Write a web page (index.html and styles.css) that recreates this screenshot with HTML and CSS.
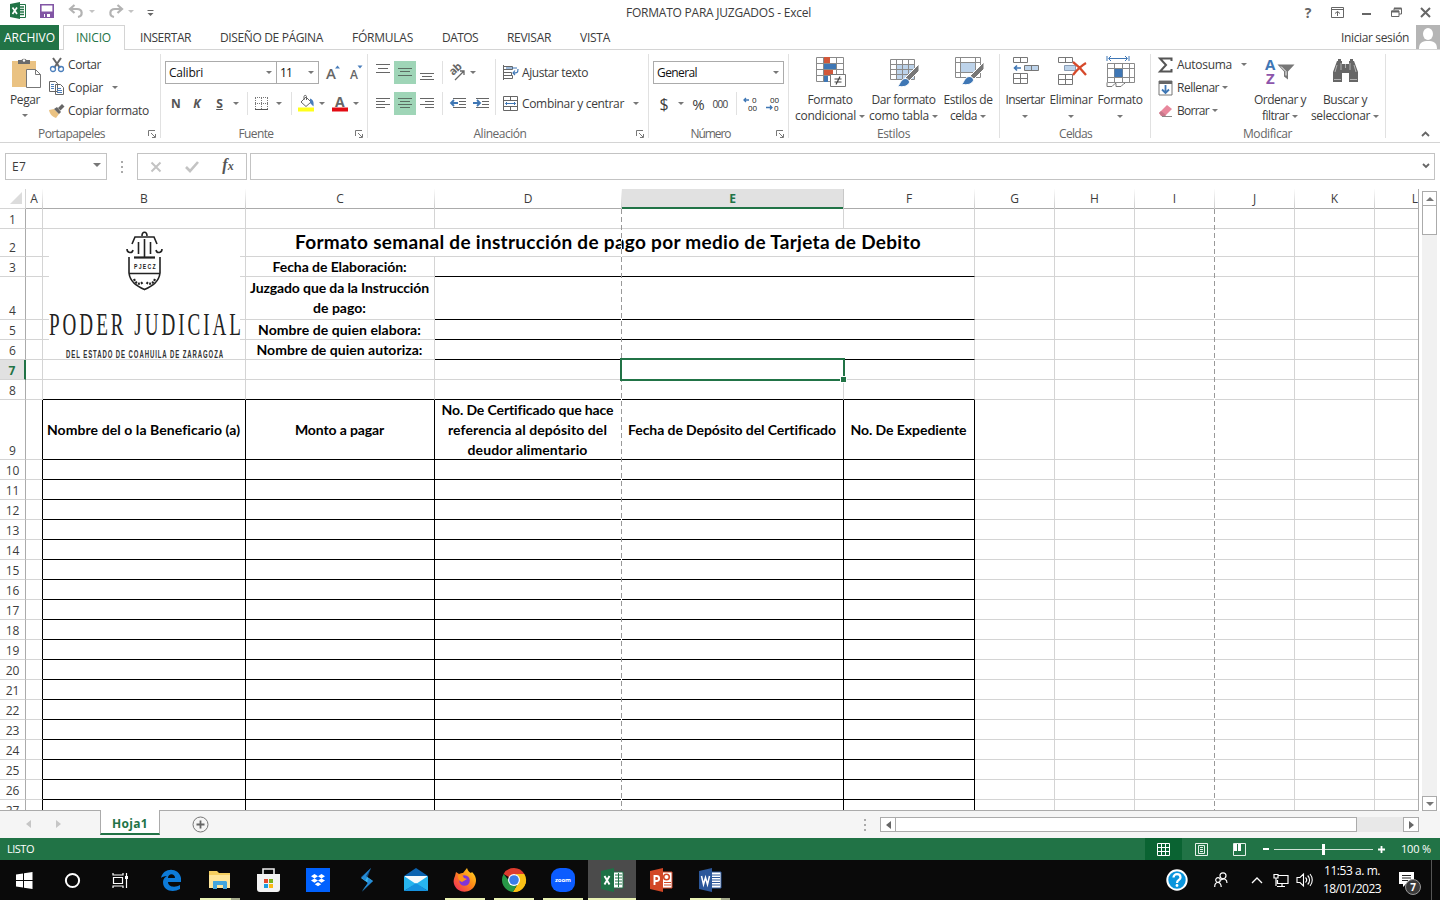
FILE: index.html
```html
<!DOCTYPE html>
<html lang="es">
<head>
<meta charset="utf-8">
<title>FORMATO PARA JUZGADOS - Excel</title>
<link rel="stylesheet" href="styles.css">
</head>
<body>
<div class="app">
  <header class="titlebar">
    <div class="quick">
      <svg width="18" height="18" viewBox="0 0 18 18"><path d="M9 2.500h7.500v13H9" fill="#fff" stroke="#217346"/><path d="M11 5h4M11 7.500h4M11 10h4M11 12.500h4" stroke="#217346" stroke-width="1.300"/><path d="M1 2l10-2v17L1 15z" fill="#217346"/><path d="M3.500 5.500l4.500 6.500M8 5.500L3.500 12" stroke="#fff" stroke-width="1.700"/></svg>
      <svg class="save" width="14" height="14" viewBox="0 0 14 14"><path d="M.8.8h12.400v12.400H.8z" fill="#fff" stroke="#8256a5" stroke-width="1.600"/><path d="M1 7.500h12v6H1z" fill="#8256a5"/><path d="M4 10h6v3H4z" fill="#fff"/><path d="M5 10h2v3H5z" fill="#8256a5"/></svg>
      <svg class="undo" width="16" height="14" viewBox="0 0 16 14"><path d="M6.500 1L2 5l4.500 4M2 5h7c6 0 6 7 1 8" fill="none" stroke="#b3b3b3" stroke-width="2.200"/></svg>
      <i class="dn pale"></i>
      <svg class="redo" width="16" height="14" viewBox="0 0 16 14"><path d="M9.500 1L14 5 9.500 9M14 5H7C1 5 1 12 6 13" fill="none" stroke="#b3b3b3" stroke-width="2.200"/></svg>
      <i class="dn pale"></i>
      <svg class="custom" width="7" height="8" viewBox="0 0 7 8"><path d="M.5 1.500h6" stroke="#666"/><path d="M.5 4h6l-3 3z" fill="#666"/></svg>
    </div>
    <div class="doc"><span data-w="185">FORMATO PARA JUZGADOS - Excel</span></div>
    <div class="wincontrols">
      <b>?</b>
      <svg width="13" height="11" viewBox="0 0 13 11"><path d="M.5.5h12v10H.5zM.5 2.500h12M6.500 9V4.500M4 6.500l2.500-2 2.500 2" fill="none" stroke="#666"/></svg>
      <svg width="11" height="11" viewBox="0 0 11 11"><path d="M1 7h9" stroke="#666" stroke-width="2"/></svg>
      <svg width="11" height="11" viewBox="0 0 11 11"><path d="M3 3V1.500h7.500V7H8M.5 4h7.500v5.500H.5z" fill="none" stroke="#666"/><path d="M3 1.500h7.500M.5 4.500H8" stroke="#666" stroke-width="2"/></svg>
      <svg width="11" height="11" viewBox="0 0 11 11"><path d="M1 1l9 9M10 1l-9 9" stroke="#666" stroke-width="2"/></svg>
    </div>
  </header>

  <nav class="tabs">
    <div class="file"><span data-w="51">ARCHIVO</span></div>
    <div class="active"><span data-w="35">INICIO</span></div>
    <div class="others"><span data-w="51">INSERTAR</span><span data-w="103">DISEÑO DE PÁGINA</span><span data-w="61">FÓRMULAS</span><span data-w="36">DATOS</span><span data-w="44">REVISAR</span><span data-w="30">VISTA</span></div>
    <div class="login"><span data-w="68">Iniciar sesión</span>
      <svg width="24" height="24" viewBox="0 0 24 24"><path d="M0 0h24v24H0z" fill="#b5b5b5"/><ellipse cx="12" cy="9" rx="5" ry="6" fill="#fff"/><path d="M3 24c0-7 4-8 9-8s9 1 9 8z" fill="#fff"/></svg></div>
  </nav>

  <section class="ribbon">
    <div class="group clip">
      <div class="body">
        <div class="big paste">
          <svg width="31" height="32" viewBox="0 0 31 32"><path d="M1 4h24v26H1z" fill="#eac282"/><path d="M7 7V3h3.500a3 3 0 0 1 5 0H19v4z" fill="#6b6b6b"/><circle cx="13" cy="3.500" r="1.200" fill="#fff"/><path d="M15.500 12.500h9l5 5v13h-14z" fill="#fff" stroke="#777"/><path d="M24.500 12.500v5h5" fill="none" stroke="#777"/></svg>
          <span data-w="30">Pegar</span><i class="dn"></i>
        </div>
        <div class="list">
          <div><svg width="16" height="16" viewBox="0 0 16 16"><path d="M4 1l7 10M12 1L5 11" stroke="#666" stroke-width="2"/><circle cx="4" cy="12" r="2.500" fill="none" stroke="#4a7ebb" stroke-width="1.300"/><circle cx="12" cy="12" r="2.500" fill="none" stroke="#4a7ebb" stroke-width="1.300"/></svg><span data-w="33">Cortar</span></div>
          <div><svg width="16" height="16" viewBox="0 0 16 16"><path d="M.5 1.500h6l2 2v8h-8zM6.500 4.500h5l3 3v7h-8z" fill="#fff" stroke="#666"/><path d="M2 4.500h3M2 6.500h3M2 8.500h3M8 8.500h4M8 10.500h5M8 12.500h5" stroke="#4a7ebb"/></svg><span data-w="35">Copiar</span><i class="dn"></i></div>
          <div><svg width="16" height="16" viewBox="0 0 16 16"><path d="M0 7l5-1 5 5-3 4C4 14 1 12 0 7z" fill="#eac282"/><path d="M5 6l3-2 4 5-2 2zM9 5l4-4 2.500 2.500-4 4z" fill="#666"/></svg><span data-w="81">Copiar formato</span></div>
        </div>
      </div>
      <footer><span data-w="67">Portapapeles</span><svg class="launch" width="8" height="8" viewBox="0 0 8 8"><path d="M.5 6V.5H7M3 3l4 4M7.500 4v3.500H4" fill="none" stroke="#777"/></svg></footer>
    </div>

    <div class="group font">
      <div class="body col">
        <div class="combos"><div class="combo"><span data-w="34">Calibri</span><i class="dn"></i></div><div class="combo size"><span data-w="12">11</span><i class="dn"></i></div>
          <svg width="14" height="16" viewBox="0 0 14 16"><text x="-1" y="14" class="ga">A</text><path d="M8 3.500l2.500-3 2.500 3z" fill="#4a7ebb"/></svg>
          <svg width="14" height="16" viewBox="0 0 14 16"><text x="1" y="14" class="ga small">A</text><path d="M8.500.5l2.500 3 2.500-3z" fill="#4a7ebb"/></svg></div>
        <div class="marks"><b>N</b><b><em>K</em></b><b><u>S</u></b><i class="dn"></i><i class="sep"></i>
          <svg width="14" height="14" viewBox="0 0 14 14"><path d="M.5 1v12M6.500 1v12M12.500 1v12M0 .5h13M0 6.500h13" stroke="#777" stroke-dasharray="1 1"/><path d="M0 12.500h13" stroke="#555"/></svg><i class="dn"></i><i class="sep"></i>
          <svg width="17" height="17" viewBox="0 0 17 17"><path d="M3 7l5-5 5 5-5 4.500zM6 5V1.500c0-1.500 2.500-1.500 2.500 0V5" fill="#fff" stroke="#666"/><path d="M12 3.500c3 1 4 3 3.500 8L12 8z" fill="#4a7ebb"/><path d="M0 12.500h16v4H0z" fill="#ffff1a"/></svg><i class="dn"></i>
          <svg width="17" height="17" viewBox="0 0 17 17"><text x="3" y="11.500" class="fa">A</text><path d="M0 12.500h16v4H0z" fill="#e30b12"/></svg><i class="dn"></i></div>
      </div>
      <footer><span data-w="35">Fuente</span><svg class="launch" width="8" height="8" viewBox="0 0 8 8"><path d="M.5 6V.5H7M3 3l4 4M7.500 4v3.500H4" fill="none" stroke="#777"/></svg></footer>
    </div>

    <div class="group align">
      <div class="body">
        <div class="aligns">
          <svg width="14" height="23" viewBox="0 0 14 23"><path d="M0 3.500h14M2 7.500h10M0 11.500h14" stroke="#666"/></svg>
          <svg class="on" width="22" height="23" viewBox="-4 0 22 23"><path d="M0 7.500h14M2 10.500h10M0 14.500h14" stroke="#5b6d62"/></svg>
          <svg width="14" height="23" viewBox="0 0 14 23"><path d="M0 12.500h14M2 15.500h10M0 18.500h14" stroke="#666"/></svg><i class="sep"></i>
          <svg width="18" height="18" viewBox="0 0 18 18"><text transform="translate(4 12) rotate(-42)" class="ab" textLength="13">ab</text><path d="M6 16l9-9M11 7h4v4" fill="none" stroke="#666" stroke-width="1.300"/></svg><i class="dn"></i>
          <svg width="14" height="23" viewBox="0 0 14 23"><path d="M0 6.500h14M0 9.500h9M0 12.500h14M0 15.500h9" stroke="#666"/></svg>
          <svg class="on" width="22" height="23" viewBox="-4 0 22 23"><path d="M0 6.500h14M2 9.500h10M0 12.500h14M2 15.500h10" stroke="#5b6d62"/></svg>
          <svg width="14" height="23" viewBox="0 0 14 23"><path d="M0 6.500h14M5 9.500h9M0 12.500h14M5 15.500h9" stroke="#666"/></svg><i class="sep"></i>
          <svg width="16" height="12" viewBox="0 0 16 12"><path d="M3 .5h13M9 3.500h7M9 6.500h7M3 9.500h13" stroke="#666"/><path d="M8 5H1M4 2L1 5l3 3" fill="none" stroke="#3f77b5" stroke-width="1.800"/></svg>
          <svg width="16" height="12" viewBox="0 0 16 12"><path d="M3 .5h13M9 3.500h7M9 6.500h7M3 9.500h13" stroke="#666"/><path d="M0 5h7M4 2l3 3-3 3" fill="none" stroke="#3f77b5" stroke-width="1.800"/></svg>
        </div>
        <div class="wraps">
          <div><svg width="16" height="16" viewBox="0 0 16 16"><path d="M.5 0v15M.5 1.500h9v3h-9zM.5 7.500h8v3h-8zM.5 10.500h9v3h-9z" fill="none" stroke="#666"/><path d="M3 3h11M15 4c0 4-1 4-5 4M12 5.500L10 8l2 2" fill="none" stroke="#3f77b5" stroke-width="1.200"/></svg><span data-w="66">Ajustar texto</span></div>
          <div><svg width="16" height="16" viewBox="0 0 16 16"><path d="M.5.5h14v14H.5zM.5 4.500h14M.5 10.500h14M7.500.5v4M7.500 10.500v4" fill="none" stroke="#666"/><path d="M2.500 7.500h10M4 6L2.500 7.500 4 9M11 6l1.500 1.500L11 9" fill="none" stroke="#3f77b5"/></svg><span data-w="102">Combinar y centrar</span><i class="dn"></i></div>
        </div>
      </div>
      <footer><span data-w="53">Alineación</span><svg class="launch" width="8" height="8" viewBox="0 0 8 8"><path d="M.5 6V.5H7M3 3l4 4M7.500 4v3.500H4" fill="none" stroke="#777"/></svg></footer>
    </div>

    <div class="group number">
      <div class="body col">
        <div class="combo"><span data-w="40">General</span><i class="dn"></i></div>
        <div class="nums"><span class="cur">$</span><i class="dn"></i><span class="pct">%</span><span class="mil" data-w="15">000</span><i class="sep"></i>
          <svg width="15" height="14" viewBox="0 0 15 14"><text x="9" y="6" class="dg" textLength="5">0</text><text x="5" y="13.500" class="dg" textLength="9">00</text><path d="M6 3H1M3 1L1 3l2 2" fill="none" stroke="#3f77b5" stroke-width="1.300"/></svg>
          <svg width="15" height="14" viewBox="0 0 15 14"><text x="5" y="6" class="dg" textLength="9">00</text><text x="9" y="13.500" class="dg" textLength="5">0</text><path d="M1 10.500h6M5 8.500l2 2-2 2" fill="none" stroke="#3f77b5" stroke-width="1.300"/></svg></div>
      </div>
      <footer><span data-w="40">Número</span><svg class="launch" width="8" height="8" viewBox="0 0 8 8"><path d="M.5 6V.5H7M3 3l4 4M7.500 4v3.500H4" fill="none" stroke="#777"/></svg></footer>
    </div>

    <div class="group styles">
      <div class="body">
        <div class="big">
          <svg width="31" height="31" viewBox="0 0 31 31"><path d="M1.500 1.500h27v24h-27zM1.500 7.500h27M1.500 13.500h27M1.500 19.500h27M8.500 1.500v24M21.500 1.500v24" fill="#fff" stroke="#8a8a8a"/><path d="M9 1h6v6H9zM9 14h9v5H9z" fill="#d2583a"/><path d="M9 8h12v5H9zM9 20h4v6H9z" fill="#3f77b5"/><path d="M15.500 18.500h15v12h-15z" fill="#fff" stroke="#777"/><path d="M19.500 23h7M19.500 26h7M25 20.500l-4 8" stroke="#444" stroke-width="1.200"/></svg>
          <span data-w="45">Formato</span><p><span data-w="61">condicional</span><i class="dn"></i></p></div>
        <div class="big">
          <svg width="31" height="31" viewBox="0 0 31 31"><path d="M2.500 3.500h24v20h-24z" fill="#fff"/><path d="M9 9h17v14H9z" fill="#bdd3ea"/><path d="M2.500 3.500h24v20h-24zM2.500 8.500h24M2.500 13.500h24M2.500 18.500h24M8.500 3.500v20M14.500 3.500v20M20.500 3.500v20" fill="none" stroke="#8a8a8a"/><path d="M31 8v7L21 25l-4-3z" fill="#777" stroke="#fff"/><path d="M9 30.500c3-1 3-7 8-8 4 0 6 4 3 6-3 3-7 2-11 2z" fill="#3f77b5" stroke="#fff"/></svg>
          <span data-w="64">Dar formato</span><p><span data-w="60">como tabla</span><i class="dn"></i></p></div>
        <div class="big">
          <svg width="31" height="31" viewBox="0 0 31 31"><path d="M2.500 1.500h25v20h-25z" fill="#fff"/><path d="M8 7h14v9H8z" fill="#bdd3ea"/><path d="M2.500 1.500h25v20h-25zM2.500 6.500h25M2.500 16.500h25M7.500 1.500v20M22.500 1.500v20" fill="none" stroke="#8a8a8a"/><path d="M31 6v7L21 23l-4-3z" fill="#777" stroke="#fff"/><path d="M8 28.500c3-1 3-7 8-8 4 0 6 4 3 6-3 3-7 2-11 2z" fill="#3f77b5" stroke="#fff"/></svg>
          <span data-w="49">Estilos de</span><p><span data-w="27">celda</span><i class="dn"></i></p></div>
      </div>
      <footer><span data-w="33">Estilos</span></footer>
    </div>

    <div class="group cells">
      <div class="body">
        <div class="big">
          <svg width="31" height="31" viewBox="0 0 31 31"><path d="M3.500 1.500h14v5h-14zM10.500 1.500v5M3.500 17.500h14v10h-14zM3.500 22.500h14M10.500 17.500v10" fill="#fff" stroke="#777"/><path d="M14.500 9.500h14v5h-14zM21.500 9.500v5" fill="#bdd3ea" stroke="#777"/><path d="M11 12H4M7 9.500L4.500 12 7 14.500" fill="none" stroke="#3f77b5" stroke-width="1.600"/></svg>
          <span data-w="39">Insertar</span><p><i class="dn"></i></p></div>
        <div class="big">
          <svg width="31" height="31" viewBox="0 0 31 31"><path d="M2.500 1.500h14v5h-14zM9.500 1.500v5M2.500 18.500h14v10h-14zM2.500 23.500h14M9.500 18.500v10" fill="#fff" stroke="#777"/><path d="M8.500 9.500h11v5h-11z" fill="#bdd3ea" stroke="#8a9db5"/><path d="M17 6c4 3 9 8 13 13M30 7c-5 3-10 8-13 12" fill="none" stroke="#d6492a" stroke-width="2.200"/></svg>
          <span data-w="43">Eliminar</span><p><i class="dn"></i></p></div>
        <div class="big">
          <svg width="31" height="31" viewBox="0 0 31 31"><path d="M2 0v5M24 0v5M4 2.500h18M6 0L3.500 2.500 6 5M20 0l2.500 2.500L20 5" fill="none" stroke="#3f77b5"/><path d="M2.500 7.500h27v19h-27zM2.500 12.500h27M2.500 21.500h27M9.500 7.500v19M17.500 7.500v19M24.500 7.500v19" fill="#fff" stroke="#8a8a8a"/><path d="M9.500 13h8v8h-8z" fill="#3f77b5"/><path d="M2 26.500v4h5l3-3h1v3h5l3-3h1" fill="none" stroke="#777"/></svg>
          <span data-w="45">Formato</span><p><i class="dn"></i></p></div>
      </div>
      <footer><span data-w="33">Celdas</span></footer>
    </div>

    <div class="group edit">
      <div class="body">
        <div class="list">
          <div><svg width="15" height="16" viewBox="0 0 15 16"><path d="M13.500 4V1.500H2L8 8l-6 6.500h11.500V12" fill="none" stroke="#555" stroke-width="2"/></svg><span data-w="55">Autosuma</span><i class="dn far"></i></div>
          <div><svg width="15" height="16" viewBox="0 0 15 16"><path d="M1 1h13v14H1z" fill="#fff" stroke="#777"/><path d="M1 1h13v3H1z" fill="#666"/><path d="M7.500 5v8M4 9.500L7.500 13 11 9.500" fill="none" stroke="#3f77b5" stroke-width="1.800"/></svg><span data-w="42">Rellenar</span><i class="dn"></i></div>
          <div><svg width="15" height="16" viewBox="0 0 15 16"><path d="M1 10l8-8 5 4-7 7H3z" fill="#e8879c"/><path d="M1 10l2-2 5 4-1.500 1.500H4z" fill="#c7788b"/><path d="M4 13.500h10" stroke="#888"/></svg><span data-w="32">Borrar</span><i class="dn"></i></div>
        </div>
        <div class="big sort">
          <svg width="31" height="31" viewBox="0 0 31 31"><text x="0" y="13.500" class="az a">A</text><text x="1" y="27.500" class="az z">Z</text><path d="M12.500 8.500h17l-6.500 7v8l-4-3v-5z" fill="#777"/><path d="M16 10.500l5 5v4" fill="none" stroke="#fff"/></svg>
          <span data-w="52">Ordenar y</span><p><span data-w="27">filtrar</span><i class="dn"></i></p></div>
        <div class="big find">
          <svg width="31" height="31" viewBox="0 0 31 31"><path d="M3 16l4-11h5v3h7V5h5l4 11v10h-9v-9h-7v9H3z" fill="#666"/><path d="M8 3h3v3H8zM20 3h3v3h-3z" fill="#666"/><path d="M15.500 8v4M7 9l-2 7M24 9l2 7M11 7v7M20 7v7M4 23.500h7M20 23.500h7" stroke="#fff" stroke-width=".5"/></svg>
          <span data-w="44">Buscar y</span><p><span data-w="59">seleccionar</span><i class="dn"></i></p></div>
      </div>
      <footer><span data-w="49">Modificar</span></footer>
    </div>
    <div class="collapse"><svg width="9" height="6" viewBox="0 0 9 6"><path d="M1 5l3.500-3.500L8 5" fill="none" stroke="#666" stroke-width="1.800"/></svg></div>
  </section>

  <section class="formula">
    <div class="name"><span data-w="14">E7</span><i class="dn big-dn"></i></div>
    <i class="dots"></i>
    <div class="fx"><svg width="12" height="12" viewBox="0 0 12 12"><path d="M1.500 1.500l9 9M10.500 1.500l-9 9" stroke="#c3c3c3" stroke-width="2"/></svg><svg width="14" height="12" viewBox="0 0 14 12"><path d="M1 6l4 4 8-9" fill="none" stroke="#c3c3c3" stroke-width="2.600"/></svg><em>f<small>x</small></em></div>
    <div class="input"><svg width="8" height="6" viewBox="0 0 8 6"><path d="M1 1l3 3 3-3" fill="none" stroke="#666" stroke-width="1.800"/></svg></div>
  </section>

  <main class="sheetwrap">
    <div class="sheet" id="sheet"></div>
    <div class="vscroll"><div class="btn"><i class="up"></i></div><div class="thumb"></div><div class="track"></div><div class="btn"><i class="dn"></i></div></div>
  </main>

  <section class="sheettabs">
    <i class="tri left"></i><i class="tri right"></i>
    <div class="tab"><span data-w="36">Hoja1</span></div>
    <svg class="plus" width="17" height="17" viewBox="0 0 17 17"><circle cx="8.500" cy="8.500" r="7.500" fill="none" stroke="#777"/><path d="M8.500 4.500v8M4.500 8.500h8" stroke="#666" stroke-width="1.800"/></svg>
    <i class="dots"></i>
    <div class="hscroll"><div class="btn"><i class="tri left"></i></div><div class="thumb"></div><div class="track"></div><div class="btn"><i class="tri right"></i></div></div>
  </section>

  <section class="status">
    <span data-w="27">LISTO</span>
    <div class="views">
      <div class="view cur"><svg width="13" height="13" viewBox="0 0 13 13"><path d="M.5.5h12v12H.5zM.5 4.500h12M.5 8.500h12M4.500.5v12M8.500 .5v12" fill="none" stroke="#fff"/></svg></div>
      <div class="view"><svg width="13" height="13" viewBox="0 0 13 13"><path d="M.5.5h12v12H.5zM3.500 2.500h6v8h-6zM5 4.500h3M5 6.500h3M5 8.500h3" fill="none" stroke="#e5f0e9"/></svg></div>
      <div class="view"><svg width="13" height="13" viewBox="0 0 13 13"><path d="M.5.5h12v12H.5z" fill="none" stroke="#e5f0e9"/><path d="M1 1h3v7H1zM5 1h3v7H5z" fill="#fff"/></svg></div>
    </div>
    <div class="zoom"><b></b><div class="slider"><i></i></div><svg width="9" height="9" viewBox="0 0 9 9"><path d="M4.500 1v7M1 4.500h7" stroke="#fff" stroke-width="1.800"/></svg></div>
    <span class="pctz" data-w="30">100 %</span>
  </section>

  <footer class="taskbar">
    <div class="sys">
      <svg width="17" height="17" viewBox="0 0 17 17"><path d="M0 2.500L7 1.500V8H0zM8 1.300L16.500 0v8H8zM0 9h7v6.500l-7-1zM8 9h8.500v8L8 15.700z" fill="#fff"/></svg>
      <svg width="17" height="17" viewBox="0 0 17 17"><circle cx="8.500" cy="8.500" r="6.600" fill="none" stroke="#fff" stroke-width="2"/></svg>
      <svg width="17" height="17" viewBox="0 0 17 17"><path d="M1 1v2h10V1M1 16v-2h10v2M1.500 5.500h9v6h-9zM14.500 1v15" fill="none" stroke="#fff" stroke-width="1.200"/><path d="M13 4h3v3h-3z" fill="#fff"/></svg>
    </div>
    <div class="apps">
      <div><svg width="22" height="22" viewBox="0 0 22 22"><path d="M1 9C3-2 19-2 21 9v4H8c0 5 7 6 12 3v4C13 24 3 22 3 13c0-3 2-5 4-6-3 0-5 1-6 2zm7 0h7c0-5-7-5-7 0z" fill="#0d7bd8"/></svg></div>
      <div class="run more"><svg width="22" height="20" viewBox="0 0 22 20"><path d="M0 1h8l2 2h11v15H0z" fill="#f5cf60"/><path d="M0 5h21v13H0z" fill="#ffe69a"/><path d="M4 19v-7c0-1 0-1 1-1h12l1 1v7h-4v-4H8v4z" fill="#43a6dd"/></svg></div>
      <div><svg width="24" height="26" viewBox="0 0 24 26"><path d="M6 8V2h11v6" fill="none" stroke="#eee" stroke-width="1.600"/><path d="M0 7h23v15c0 2-1 3-3 3H3c-2 0-3-1-3-3z" fill="#f3f3f3"/><path d="M7 12h4v4H7z" fill="#e64a2e"/><path d="M12 12h4v4h-4z" fill="#7ab51d"/><path d="M7 17h4v4H7z" fill="#1b9de2"/><path d="M12 17h4v4h-4z" fill="#fbb913"/></svg></div>
      <div><svg width="24" height="24" viewBox="0 0 24 24"><path d="M0 0h24v24H0z" fill="#0061fe"/><path d="M8.500 6l3.500 2.200-3.500 2.200L5 8.200zM15.500 6L19 8.200l-3.500 2.200L12 8.200zM8.500 10.400l3.500 2.200-3.500 2.200L5 12.600zM15.500 10.400l3.500 2.200-3.500 2.200-3.500-2.200zM12 14.300l3.200 2-3.200 2-3.200-2z" fill="#fff"/></svg></div>
      <div><svg width="16" height="24" viewBox="0 0 16 24"><path d="M12 0L2 10l7 5-6 8 11-10-7-5z" fill="#3dbcf4"/><path d="M12 0L2 9l4 4 3-5zM3 24l11-11-5-3-1 6z" fill="#1873c8" opacity=".65"/></svg></div>
      <div><svg width="25" height="24" viewBox="0 0 25 24"><path d="M0 8l12-8 12 8v6H0z" fill="#0b63b0"/><path d="M1 8h22v10H1z" fill="#f6f9fb"/><path d="M0 8l12 8-12 7zM24 8v15L12 16z" fill="#27b5ef"/><path d="M0 23l12-8 12 8z" fill="#1592df"/></svg></div>
      <div class="run"><svg width="24" height="24" viewBox="0 0 24 24"><defs><linearGradient id="ff" x1="1" y1="0" x2="0" y2="1"><stop offset="0" stop-color="#ffe226"/><stop offset=".45" stop-color="#ff8a16"/><stop offset="1" stop-color="#f02066"/></linearGradient></defs><path d="M2 8l1-4 3 2c2-1 3-1 4-1l4-5c1 3 2 4 4 5l1-1c4 4 5 8 3 13-4 9-18 9-21-1-1-3 0-6 1-8z" fill="url(#ff)"/><circle cx="11.500" cy="12.500" r="5.300" fill="#8135d8"/><path d="M5 7c3-1 5 0 6 3l3 1-5 3c-3-1-4-3-4-7z" fill="#ff9318"/></svg></div>
      <div class="run"><svg width="24" height="24" viewBox="0 0 24 24"><path d="M12 12L1.600 6A12 12 0 0 1 22.400 6z" fill="#dc3c2e"/><path d="M12 12H24A12 12 0 0 1 11 24l6-9z" fill="#fbc116"/><path d="M22.400 6A12 12 0 0 1 11 24l6-10-3-8z" fill="#fbc116"/><path d="M1.600 6A12 12 0 0 0 11 24l5-9-8-1z" fill="#279847"/><circle cx="12" cy="12" r="6" fill="#fff"/><circle cx="12" cy="12" r="4.800" fill="#3b7de9"/></svg></div>
      <div class="run"><svg width="24" height="24" viewBox="0 0 24 24"><rect width="24" height="24" rx="9" fill="#0b5cff"/><text x="4" y="14" class="zm" textLength="16">zoom</text></svg></div>
      <div class="run sel"><svg width="24" height="24" viewBox="0 0 24 24"><path d="M13 4h10v16H13" fill="#fff" stroke="#217346"/><path d="M15 7h7M15 10h7M15 13h7M15 16h7M18.500 5v14" stroke="#217346"/><path d="M1 3l13-3v24L1 21z" fill="#1e7145"/><path d="M4.500 8l5 8.500M9.500 8l-5 8.500" stroke="#fff" stroke-width="1.900"/></svg></div>
      <div><svg width="24" height="24" viewBox="0 0 24 24"><path d="M13 4h10v16H13z" fill="#fff" stroke="#d24726"/><path d="M15 14.500h7M15 17h7" stroke="#d24726"/><circle cx="17.500" cy="9" r="2.800" fill="none" stroke="#d24726" stroke-width="1.600"/><path d="M1 3l13-3v24L1 21z" fill="#d24726"/><path d="M5.500 17V8h2c3.500 0 3.500 5 0 5h-2" fill="none" stroke="#fff" stroke-width="1.900"/></svg></div>
      <div class="run more"><svg width="24" height="24" viewBox="0 0 24 24"><path d="M13 4h10v16H13z" fill="#fff" stroke="#2b579a"/><path d="M14 7h8M14 9.500h8M14 12h8M14 14.500h8M14 17h8" stroke="#2b579a"/><path d="M1 3l13-3v24L1 21z" fill="#2b579a"/><path d="M3.500 8l2 8.500 2-7 2 7 2-8.500" fill="none" stroke="#fff" stroke-width="1.500"/></svg></div>
    </div>
    <div class="tray">
      <svg width="22" height="24" viewBox="0 0 22 24"><circle cx="11" cy="12" r="9.700" fill="#0b95dc" stroke="#fff" stroke-width="2"/><path d="M7.500 9.500c0-4.500 7-4.500 7 0 0 2.500-3.500 2.500-3.500 5.500" fill="none" stroke="#fff" stroke-width="2.200"/><circle cx="11" cy="17.500" r="1.400" fill="#fff"/></svg>
      <svg class="people" width="14" height="16" viewBox="0 0 14 16"><circle cx="9" cy="3.800" r="3" fill="none" stroke="#fff" stroke-width="1.200"/><circle cx="4" cy="8" r="2.300" fill="none" stroke="#fff" stroke-width="1.200"/><path d="M.7 15c0-6 6.500-6 6.500 0M7 8c3-2 6-1 6 3" fill="none" stroke="#fff" stroke-width="1.200"/></svg>
      <svg class="chev" width="12" height="8" viewBox="0 0 12 8"><path d="M1 7l5-5 5 5" fill="none" stroke="#fff" stroke-width="1.300"/></svg>
      <svg class="net" width="16" height="15" viewBox="0 0 16 15"><path d="M5 2.500h10v8H4.500V7M4 13.500h8M9 10.500v3M1 1.500h4v3.500H1zM3 5v8" fill="none" stroke="#fff" stroke-width="1.200"/></svg>
      <svg class="vol" width="17" height="16" viewBox="0 0 17 16"><path d="M1 5.500h3l3.500-3.500v12L4 10.500H1zM9.500 5.500c1.500 1.500 1.500 3.500 0 5M11.700 3.500c2.500 2.500 2.500 6.500 0 9M14 2c3 3.500 3 8.500 0 12" fill="none" stroke="#fff" stroke-width="1.100"/></svg>
      <div class="clock"><span data-w="56">11:53 a. m.</span><span data-w="58">18/01/2023</span></div>
      <div class="note"><svg width="15" height="16" viewBox="0 0 15 16"><path d="M0 0h15v12H7l-3 3v-3H0z" fill="#fff"/><path d="M3 3.500h9M3 6h9M3 8.500h6" stroke="#222"/></svg><b>7</b></div>
      <i class="desk"></i>
    </div>
  </footer>
</div>
<script src="app.js"></script>
</body>
</html>
```

FILE: styles.css
```css
* { box-sizing: border-box; }
body { margin: 0; background: #fff; font: 12px/16px "Open Sans", "Noto Sans", sans-serif; color: #3c3c3c; overflow: hidden; }
svg { display: block; flex: none; overflow: visible; }
span { white-space: nowrap; }
.app { width: 1440px; height: 900px; display: flex; flex-direction: column; overflow: hidden; }

.dn { display: block; flex: none; width: 0; height: 0; border: 3px solid transparent; border-top-color: #777; border-bottom: 0; }
.dn.pale { border-top-color: #c3c3c3; }
.up { width: 0; height: 0; border: 4px solid transparent; border-bottom-color: #777; border-top: 0; }
.tri { width: 0; height: 0; border: 4px solid transparent; }
.tri.left { border-right: 5px solid #c6c6c6; border-left: 0; }
.tri.right { border-left: 5px solid #c6c6c6; border-right: 0; }
.dots { width: 2px; height: 12px; background: repeating-linear-gradient(#aaa 0 2px, transparent 2px 5px); }
.sep { width: 1px; height: 23px; background: #e1e1e1; }

.titlebar { height: 25px; display: grid; grid-template-columns: 626px 1fr 140px; align-items: center; }
.quick { display: flex; align-items: center; padding: 0 0 3px 9px; }
.save { margin-left: 13px; }
.undo { margin-left: 14px; }
.undo + .dn { margin-left: 5px; }
.redo { margin-left: 13px; }
.redo + .dn { margin-left: 4px; }
.custom { margin: 3px 0 0 13px; }
.wincontrols { display: grid; grid-template-columns: 16px 43px 15px 45px 13px; justify-items: center; align-items: center; color: #666; font-size: 14px; height: 23px; }

.tabs { height: 25px; display: flex; border-bottom: 1px solid #d4d4d4; line-height: 26px; }
.file { width: 59px; height: 25px; padding-left: 4px; background: #217346; color: #fff; }
.active { width: 62px; height: 25px; margin-left: 4px; padding-left: 12px; background: #fff; border: 1px solid #d4d4d4; border-bottom: 0; color: #217346; line-height: 24px; }
.others { display: flex; gap: 29px; padding-left: 15px; }
.login { margin-left: auto; display: flex; gap: 7px; line-height: 25px; }

.ribbon { height: 93px; display: flex; border-bottom: 1px solid #d4d4d4; }
.group { position: relative; height: 92px; display: flex; flex-direction: column; }
.group::after { content: ""; position: absolute; right: 0; top: 4px; width: 1px; height: 84px; background: #e1e1e1; }
.group footer { display: grid; grid-template-columns: 1fr auto 1fr; height: 17px; color: #666; align-items: center; }
.group footer span { grid-column: 2; }
.launch { justify-self: end; }
.body { height: 76px; display: flex; }
.body.col { flex-direction: column; }
.clip { width: 161px; } .font { width: 207px; } .align { width: 281px; } .number { width: 140px; }
.styles { width: 211px; } .cells { width: 151px; } .edit { width: 235px; }
.clip footer { padding-right: 18px; }
.clip .launch { margin-right: -13px; }
.font footer, .align footer, .number footer { padding-right: 17px; }
.font .launch, .align .launch, .number .launch { margin-right: -12px; }
.styles footer, .edit footer { padding-right: 2px; }

.big { display: flex; flex-direction: column; align-items: center; padding-top: 6px; }
.big > span { margin-top: 4px; line-height: 17px; }
.big p { margin: 0; height: 16px; display: flex; align-items: center; gap: 3px; }
.paste { width: 50px; padding-top: 7px; }
.paste > span { margin-top: 2px; }
.paste .dn { margin-top: 6px; }
.paste svg { margin-left: 3px; }
.list { padding-top: 3px; }
.list > div { height: 23px; display: flex; align-items: center; gap: 3px; }
.clip .list { margin-left: -1px; }
.clip .list > div .dn { margin-left: 6px; }

.combo { height: 23px; border: 1px solid #ababab; display: flex; align-items: center; justify-content: space-between; padding: 0 4px 0 3px; width: 112px; color: #111; }
.combo.size { width: 43px; margin-left: -1px; }
.combos { display: flex; align-items: center; padding-left: 4px; }
.combos svg { margin-left: 8px; }
.font .body, .number .body, .aligns { padding-top: 11px; }
.ga { font: 600 15px "Open Sans"; fill: #666; } .ga.small { font-size: 12px; }
.fa { font: bold 14px "Open Sans"; fill: #666; }
.marks { display: grid; grid-template-columns: 22px 20px 25px 8px 14px 16px 18px 6px 24px 8px 28px 4px; justify-items: center; align-items: center; height: 23px; margin: 8px 0 0 4px; color: #555; width: 193px; }
.aligns { width: 127px; padding-left: 4px; display: grid; grid-template-columns: 22px 22px 22px 8px 24px 22px; grid-template-rows: 23px 23px; row-gap: 8px; align-items: center; justify-items: center; align-content: start; }
.aligns .dn { justify-self: start; }
.on { background: #9fd5b7; }
.ab { font: bold 11px "Open Sans"; fill: #666; }
.wraps { margin-top: 9px; padding-top: 2px; display: grid; grid-template-rows: 23px 23px; row-gap: 8px; align-content: start; padding-left: 7px; border-left: 1px solid #e1e1e1; height: 56px; }
.wraps > div { display: flex; align-items: center; gap: 3px; }
.wraps .dn { margin-left: 6px; }
.number .combo { width: 131px; margin-left: 4px; }
.nums { height: 23px; margin: 8px 0 0 4px; display: grid; grid-template-columns: 22px 11px 25px 18px 14px 15px 7px 15px; justify-items: center; align-items: center; }
.nums svg:last-child { grid-column: 8; }
.cur { font-size: 16px; } .pct { font-size: 15px; } .mil { font-size: 10px; }
.dg { font: 8px "Open Sans"; fill: #222; }

.styles .body { display: grid; grid-template-columns: 82px 65px 64px; }
.cells .body { display: grid; grid-template-columns: 50px 42px 56px; }
.styles .body > *, .cells .body > * { min-width: 0; }
.edit .list { padding: 3px 0 0 7px; width: 97px; }
.edit .list span { margin-left: 1px; }
.edit .list .dn { margin-left: 0; }
.edit .list .dn.far { margin-left: 6px; }
.sort { width: 64px; } .find { width: 66px; }
.az { font: bold 15px "Open Sans"; } .a { fill: #3f77b5; } .z { fill: #8d55ab; }
.collapse { flex: 1; display: flex; justify-content: center; align-items: flex-end; padding: 0 0 5px 25px; }

.formula { height: 46px; padding-top: 10px; display: flex; align-items: flex-start; }
.name { width: 102px; height: 27px; margin-left: 5px; border: 1px solid #c3c3c3; display: flex; align-items: center; justify-content: space-between; padding: 0 5px 0 6px; }
.big-dn { border-width: 4px 4px 0; margin-top: -3px; }
.formula .dots { margin: 8px 14px 0 14px; }
.fx { width: 110px; height: 27px; border: 1px solid #c3c3c3; display: grid; grid-template-columns: 36px 36px 36px; align-items: center; justify-items: center; }
.fx em { font: italic bold 16px/20px "Liberation Serif", serif; color: #555; margin-top: -2px; }
.fx small { font-size: 12px; }
.input { width: 1185px; height: 27px; margin-left: 3px; border: 1px solid #c3c3c3; display: flex; align-items: center; justify-content: flex-end; padding: 0 4px 2px 0; }

.sheetwrap { height: 622px; display: flex; }
.sheet { position: relative; width: 1419px; height: 622px; overflow: hidden; display: grid; grid-template-columns: 26px 17px 203px 189px 187px 222px 131px repeat(5, 80px) 44px; grid-template-rows: 20px 20px 28px 20px 43px 20px 20px 20px 20px 60px repeat(17, 20px) 11px; border-right: 1px solid #ababab; border-bottom: 1px solid #ababab; }
.head { text-align: center; line-height: 19px; font-size: 12px; border-style: solid; border-image: linear-gradient(#fff, #c8c8c8) 1; border-width: 0 1px 0 0; box-shadow: inset 0 -1px #ababab; }
.head.sel { background: #e1e1e1; color: #217346; font-weight: bold; box-shadow: inset 0 -2px #217346; border-image: none; border-color: #c8c8c8; }
.head.last { text-align: right; padding-right: 1px; border: 0; }
.corner { display: flex; justify-content: flex-end; align-items: flex-end; padding: 0 3px 4px; border-right: 1px solid #d4d4d4; border-bottom: 1px solid #d4d4d4; }
.corner i { border: 6px solid #dcdcdc; border-top-color: transparent; border-left-color: transparent; }
.row { display: flex; align-items: flex-end; justify-content: center; border-right: 1px solid #ababab; border-bottom: 1px solid #d4d4d4; font-size: 12px; line-height: 17px; overflow: hidden; }
.row.sel { background: #e1e1e1; color: #217346; font-weight: bold; border-right: 2px solid #217346; }
.row.last { align-items: flex-start; line-height: 21px; }
.cell { border-right: 1px solid #d4d4d4; border-bottom: 1px solid #d4d4d4; min-width: 0; display: flex; flex-direction: column; align-items: center; justify-content: center; font: bold 14px/20px Lato, sans-serif; color: #000; padding-right: 1px; }
.cell.kb { border-bottom-color: #000; }
.cell.kr { border-right-color: #000; }
.cell.title { font-size: 19px; line-height: 24px; padding: 0 4px 1px 0; }
.break { position: relative; width: 1px; justify-self: end; grid-row: 2 / -1; background: repeating-linear-gradient(#999 0 5px, #fff 5px 8px); }
.pick { position: relative; margin: -2px -1px -1px -2px; border: 2px solid #217346; }
.pick::after { content: ""; position: absolute; right: -3px; bottom: -3px; width: 5px; height: 5px; background: #217346; box-shadow: 0 0 0 1px #fff; }
.logo { position: relative; margin-left: 6px; background: #fff; height: 130px; width: 191px; }
.pj { font: 32px "Liberation Serif", serif; fill: #222; letter-spacing: 5px; }
.sub { font: bold 10px "Liberation Sans", sans-serif; fill: #333; letter-spacing: 1.500px; }
.mono { font: bold 8px "Liberation Sans", sans-serif; fill: #222; letter-spacing: 2px; }

.vscroll { width: 15px; margin-left: 3px; padding-top: 2px; display: flex; flex-direction: column; }
.btn { width: 15px; height: 15px; border: 1px solid #ababab; background: #fff; display: flex; align-items: center; justify-content: center; flex: none; }
.vscroll .up { border-width: 0 4px 4px; }
.vscroll .thumb { height: 30px; margin-top: -1px; border: 1px solid #ababab; flex: none; }
.vscroll .track { flex: 1; background: #f1f1f1; }
.btn .dn { border-width: 4px 4px 0; }

.sheettabs { height: 27px; background: #f5f5f5; display: flex; }
.sheettabs > .tri { margin-top: 9px; }
.sheettabs > .tri.left { margin-left: 26px; }
.sheettabs > .tri.right { margin-left: 25px; }
.tab { position: relative; margin: -1px 0 0 39px; width: 60px; height: 25px; background: #fff; border: 1px solid #ababab; border-width: 0 1px; border-bottom: 2px solid #217346; color: #217346; font-weight: bold; text-align: center; line-height: 27px; }
.plus { margin: 5px 0 0 32px; }
.sheettabs .dots { margin: 8px 0 0 655px; }
.hscroll { display: flex; margin: 6px 0 0 14px; width: 539px; height: 15px; background: #e8e8e8; }
.hscroll .btn { width: 16px; }
.hscroll .thumb { width: 462px; margin-left: -1px; border: 1px solid #ababab; background: #fff; }
.hscroll .track { flex: 1; }
.btn .tri.left { border-right-color: #666; } .btn .tri.right { border-left-color: #666; }

.status { height: 22px; background: #217346; color: #fff; display: flex; align-items: center; padding-left: 7px; font-size: 11px; }
.views { display: flex; margin-left: 1111px; height: 22px; }
.view { width: 38px; display: grid; place-items: center; }
.view.cur { width: 37px; background: #0a6332; }
.zoom { display: flex; align-items: center; margin-left: 5px; }
.zoom b { width: 6px; height: 2px; background: #fff; }
.slider { width: 99px; height: 11px; background: linear-gradient(#cfe2d7, #cfe2d7) center / 100% 1px no-repeat; margin: 0 4px 0 5px; display: flex; justify-content: center; }
.slider i { width: 3px; height: 11px; background: #fff; }
.pctz { margin-left: 15px; }

.taskbar { height: 40px; background: #0a0a0a; display: flex; color: #fff; }
.sys { display: grid; grid-template-columns: repeat(3, 48px); place-items: center; margin-right: 3px; }
.apps { display: grid; grid-template-columns: repeat(12, 49px); }
.apps > div { display: grid; place-items: center; height: 40px; position: relative; padding-right: 1px; }
.run::after { content: ""; position: absolute; bottom: 0; left: 4px; width: 40px; height: 2px; background: #e9f2b4; }
.run.more::after { background: linear-gradient(90deg, #e9f2b4 31px, #a3a98a 31px); }
.run.sel { background: #4b4b4b; width: 48px; }
.run.sel::after { left: 0; width: 48px; }
.zm { font: bold 6px "Open Sans"; fill: #fff; }
.tray { display: flex; align-items: center; margin-left: auto; width: 274px; }
.people { margin-left: 26px; } .chev { margin-left: 23px; } .net { margin-left: 10px; } .vol { margin-left: 7px; }
.clock { width: 70px; margin: -1px 0 0 4px; display: flex; flex-direction: column; align-items: center; line-height: 18px; font-size: 12px; }
.note { position: relative; margin-left: 12px; }
.note b { position: absolute; left: 6px; top: 7px; width: 16px; height: 16px; border-radius: 50%; background: #3a3a3a; border: 1px solid #999; font-size: 10px; line-height: 14px; text-align: center; }
.desk { width: 1px; height: 40px; background: #555; margin-left: 17px; }
```

FILE: app.js
```javascript
const sheet = document.getElementById('sheet');
const letters = ['A', 'B', 'C', 'D', 'E', 'F', 'G', 'H', 'I', 'J', 'K', 'L'];

// text per cell: list of [line, width in pixels]
const texts = {
  C2: [['Formato semanal de instrucción de pago por medio de Tarjeta de Debito', 626]],
  C3: [['Fecha de Elaboración:', 134]],
  C4: [['Juzgado que da la Instrucción', 179], ['de pago:', 53]],
  C5: [['Nombre de quien elabora:', 163]],
  C6: [['Nombre de quien autoriza:', 166]],
  B9: [['Nombre del o la Beneficario (a)', 193]],
  C9: [['Monto a pagar', 89]],
  D9: [['No. De Certificado que hace', 172], ['referencia al depósito del', 159], ['deudor alimentario', 120]],
  E9: [['Fecha de Depósito del Certificado', 208]],
  F9: [['No. De Expediente', 116]]
};

function add(cls, col, row, span, html) {
  const el = document.createElement('div');
  el.className = cls;
  el.style.gridArea = `${row} / ${col} / span 1 / span ${span}`;
  el.innerHTML = html || '';
  sheet.append(el);
  return el;
}

add('corner', 1, 1, 1, '<i></i>');
letters.forEach((l, i) => add('head' + (l === 'E' ? ' sel' : '') + (l === 'L' ? ' last' : ''), i + 2, 1, 1, l));

for (let r = 1; r <= 27; r++) {
  add('row' + (r === 7 ? ' sel' : '') + (r === 27 ? ' last' : ''), 1, r + 1, 1, String(r));
  for (let c = 0; c < letters.length; c++) {
    let span = 1;
    let cls = 'cell';
    if (r === 2 && c === 2) { span = 4; cls += ' title'; }
    if (r >= 3 && r <= 6 && c === 3) { span = 3; cls += ' kb'; }
    if (r >= 8 && c >= 1 && c <= 5) cls += ' kb';
    if (r >= 9 && c <= 5) cls += ' kr';
    const lines = (texts[letters[c] + r] || []).map(([t, w]) => `<span data-w="${w}">${t}</span>`).join('');
    add(cls, c + 2, r + 1, span, lines);
    c += span - 1;
  }
}

for (const col of [5, 10]) {
  const line = add('break', col, 2, 1);
  line.style.gridRow = '2 / -1';
}
add('pick', 6, 8, 1);

const logo = add('logo', 3, 3, 1, `
<svg width="191" height="130" viewBox="0 0 191 130">
  <g fill="none" stroke="#222" stroke-width="1.600">
    <path d="M83 15l3-7h19l3 7M93 7c0-5 5-5 5 0M89.500 13v12M95.500 10v18M101.500 13v12"/>
    <path d="M85 28.500h21" stroke-width="2.200"/>
    <path d="M78 20c0 4 5 5 6 1M107 21c1 4 6 3 6-1M80 28v16c1 9 8 13 15.500 16.500C103 57 110 53 111 44V28M80 44.500h31"/>
    <path d="M85 50c2 5 6 6 9 3M106 50c-2 5-6 6-9 3" stroke-width="2.200" stroke-dasharray="2 1"/>
  </g>
  <text class="mono" x="85" y="40" textLength="23" lengthAdjust="spacingAndGlyphs">PJECZ</text>
  <text class="pj" x="0" y="106" textLength="195" lengthAdjust="spacingAndGlyphs">PODER JUDICIAL</text>
  <text class="sub" x="17" y="129" textLength="158" lengthAdjust="spacingAndGlyphs">DEL ESTADO DE COAHUILA DE ZARAGOZA</text>
</svg>`);
logo.style.gridRow = '3 / span 5';

// tracks each label out to its set width
document.querySelectorAll('[data-w]').forEach(el => {
  const range = document.createRange();
  range.selectNodeContents(el);
  const gap = (el.dataset.w - range.getBoundingClientRect().width) / el.textContent.length;
  el.style.letterSpacing = gap.toFixed(3) + 'px';
});
```
